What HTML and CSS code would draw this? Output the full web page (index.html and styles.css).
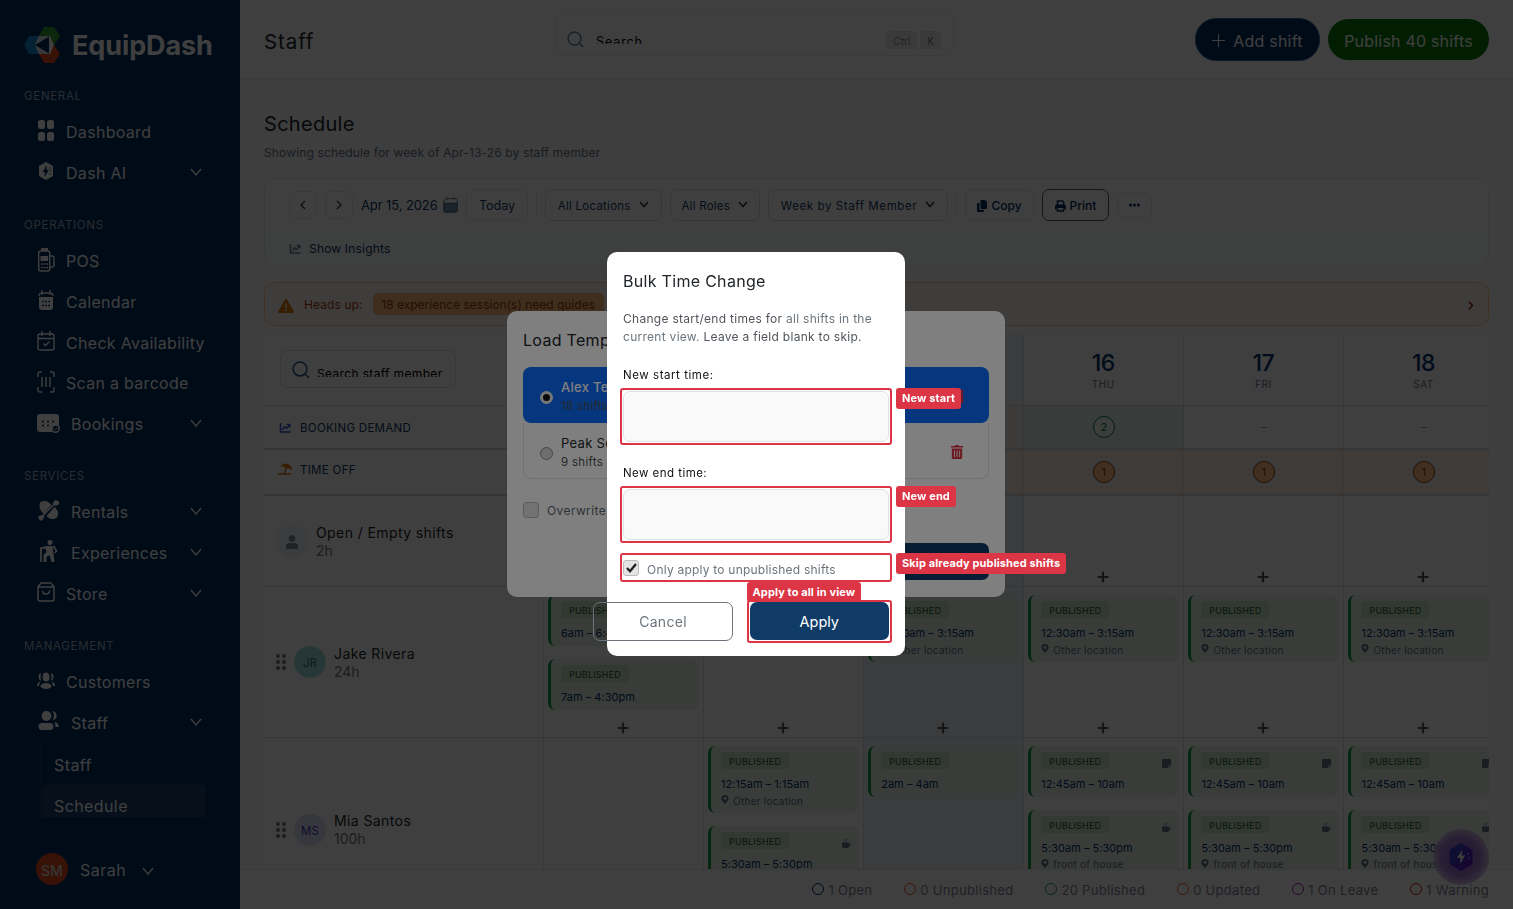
FILE: index.html
```html
<!DOCTYPE html>
<html lang="en">
<head>
  <meta charset="UTF-8">
  <meta name="viewport" content="width=device-width, initial-scale=1.0">
  <title>EquipDash - Staff Schedule</title>
  <link rel="stylesheet" href="styles.css">
</head>
<body>

  <!-- Icon sprite -->
  <svg class="sprite" xmlns="http://www.w3.org/2000/svg">
    <symbol id="i-chevron" viewBox="0 0 12 8"><path d="M1 1l5 6 5-6" fill="none" stroke="currentColor" stroke-width="1.3"/></symbol>
    <symbol id="i-down" viewBox="0 0 10 7"><path d="M1 1l4 4.5L9 1" fill="none" stroke="currentColor" stroke-width="1.5"/></symbol>
    <symbol id="i-search" viewBox="0 0 18 18"><circle cx="8" cy="8" r="6.9" fill="none" stroke="currentColor" stroke-width="1.5"/><path d="M13 13l4 4" stroke="currentColor" stroke-width="1.7"/></symbol>
    <symbol id="i-pin" viewBox="0 0 8 10"><path fill-rule="evenodd" d="M4 0a4 4 0 0 0-4 4c0 2.600 4 6 4 6s4-3.400 4-6a4 4 0 0 0-4-4zm0 2.300a1.600 1.600 0 1 1 0 3.200 1.600 1.600 0 0 1 0-3.200z" fill="currentColor"/></symbol>
    <symbol id="i-plus" viewBox="0 0 12 12"><path d="M6 1.500v9M1.500 6h9" stroke="currentColor" stroke-width="2.200" stroke-linecap="round"/></symbol>
    <symbol id="i-note" viewBox="0 0 10 10"><path d="M1 0h8q1 0 1 1v5.500H7.500q-1 0-1 1V10H1q-1 0-1-1V1q0-1 1-1z" fill="currentColor"/><path d="M10 7.300L7.300 10V7.300z" fill="currentColor"/></symbol>
    <symbol id="i-coffee" viewBox="0 0 10 10"><path d="M0 4h8v4q0 2-2 2H2q-2 0-2-2z" fill="currentColor"/><path d="M8 5h.5q1 0 1 1.200T8 7.500M2.500 3C1.500 2 3.500 1.500 2.500 0M5 3C4 2 6 1.500 5 0" fill="none" stroke="currentColor"/></symbol>
    <symbol id="i-chart" viewBox="0 0 12 11"><path d="M1 0v10h11" fill="none" stroke="currentColor" stroke-width="1.600"/><path d="M3 7.500L5.500 4l2 2L11 2M8 1.500h3.300V5" fill="none" stroke="currentColor" stroke-width="1.500"/></symbol>
    <symbol id="i-trash" viewBox="0 0 12 14"><path d="M0 1h4l.6-1h2.800L8 1h4v1.600H0z" fill="currentColor"/><path fill-rule="evenodd" d="M.8 3.400h10.400v9.100q0 1.500-1.500 1.500H2.300Q.8 14 .8 12.500zM3 5.400v6.600h.9V5.400zm2.600 0v6.600h.9V5.400zm2.600 0v6.600h.9V5.400z" fill="currentColor"/></symbol>
    <symbol id="i-drag" viewBox="0 0 10 16"><g fill="currentColor"><circle cx="2" cy="2" r="2"/><circle cx="8" cy="2" r="2"/><circle cx="2" cy="8" r="2"/><circle cx="8" cy="8" r="2"/><circle cx="2" cy="14" r="2"/><circle cx="8" cy="14" r="2"/></g></symbol>
  </svg>

  <div class="app">
    <aside class="sidebar">
      <div class="logo">
        <svg width="36" height="36" viewBox="0 0 36 36">
          <path d="M20 0h10l6 9-6 9H20l-5-9z" fill="#2fa336"/>
          <path d="M20 18h10l6 9-6 9H20l-5-9z" fill="#e2491d"/>
          <path d="M5 9h13l6 9-6 9H5l-5-9z" fill="#1389cf"/>
          <path d="M15 9h11l4 9-4 9H15l-4-9z" fill="#fff"/>
          <path d="M10 18l15-9v18z" fill="#002c60"/>
          <path d="M15 9h11l-15 9z" fill="#d8e2ec"/>
          <path d="M11 18l15 9H15z" fill="#d8e2ec"/>
        </svg>
        <span>EquipDash</span>
      </div>

      <nav class="nav">
        <h2>GENERAL</h2>
        <a class="nav-item">
          <svg width="18" height="22" viewBox="0 0 18 22"><g fill="currentColor"><rect x="1" y="0" width="7" height="9" rx="2.500"/><rect x="10" y="0" width="7" height="9" rx="2.500"/><rect x="1" y="12" width="7" height="9" rx="2.500"/><rect x="10" y="12" width="7" height="9" rx="2.500"/></g></svg>
          <span>Dashboard</span>
        </a>
        <a class="nav-item">
          <svg width="18" height="18" viewBox="0 0 18 18"><path d="M9 0l7 4v10l-7 4-7-4V4z" fill="currentColor"/><path d="M9.500 4L6 10h2.500L8 14l3.500-6H9zM12 6h2M12.500 9h2M12 12h2" fill="#002c60" stroke="#002c60" stroke-width=".6"/></svg>
          <span>Dash AI</span><svg class="caret"><use href="#i-chevron"/></svg>
        </a>

        <h2>OPERATIONS</h2>
        <a class="nav-item">
          <svg width="18" height="24" viewBox="0 0 18 24"><path d="M4 0h7v3H4z" fill="currentColor"/><rect x="1.700" y="3" width="11" height="20" rx="2" fill="none" stroke="currentColor" stroke-width="1.500"/><path d="M3.500 8h7.500v5H3.500z" fill="currentColor"/><path d="M4 16h7M4 19.500h7" stroke="currentColor" stroke-width="1.300" stroke-dasharray="1.800 .8"/><path d="M13 8h2q2 0 2 2v7q0 2-2 2h-2" fill="none" stroke="currentColor" stroke-width="1.400"/></svg>
          <span>POS</span>
        </a>
        <a class="nav-item">
          <svg width="18" height="21" viewBox="0 0 18 21"><path d="M2 7h14v10q0 3-3 3H5q-3 0-3-3z" fill="currentColor"/><path d="M2 6q0-3 3-3h8q3 0 3 3M5 0v5M13 0v5" fill="none" stroke="currentColor" stroke-width="1.300"/><path d="M5 11.500h8M5 15.500h8" stroke="#002c60" stroke-width="1.500" stroke-dasharray="1.800 1.300"/></svg>
          <span>Calendar</span>
        </a>
        <a class="nav-item">
          <svg width="18" height="20" viewBox="0 0 18 20"><rect x="1" y="3" width="16" height="16" rx="2" fill="none" stroke="currentColor" stroke-width="1.400"/><path d="M5 0v5M13 0v5M1 7.500h16M6.500 12.500l2 2 4-4" fill="none" stroke="currentColor" stroke-width="1.400"/></svg>
          <span>Check Availability</span>
        </a>
        <a class="nav-item">
          <svg width="18" height="22" viewBox="0 0 18 22"><path d="M5 1H3Q1 1 1 3v3M13 1h2q2 0 2 2v3M5 21H3q-2 0-2-2v-3M13 21h2q2 0 2-2v-3M5 6v10M9 6v10M13 6v10" fill="none" stroke="currentColor" stroke-width="1.400"/></svg>
          <span>Scan a barcode</span>
        </a>
        <a class="nav-item wide">
          <svg width="23" height="20" viewBox="0 0 23 20"><path d="M3 1h16q3 0 3 3v9a5 5 0 0 0-7 6H3q-3 0-3-3V4q0-3 3-3z" fill="currentColor"/><path d="M5 8.500h12M5 12.500h8" stroke="#002c60" stroke-width="1.500" stroke-dasharray="2 3"/><circle cx="18.500" cy="15.500" r="3.700" fill="none" stroke="currentColor" stroke-width="1.600"/><path d="M17 15.500l1.200 1.200 2-2" fill="none" stroke="currentColor"/></svg>
          <span>Bookings</span><svg class="caret"><use href="#i-chevron"/></svg>
        </a>

        <h2>SERVICES</h2>
        <a class="nav-item wide">
          <svg width="22" height="21" viewBox="0 0 22 21"><path d="M3 2q6-3 11 3L6 14Q0 8 3 2zM19 18q-6 3-10-2l8-9q6 5 2 11z" fill="currentColor"/><path d="M4 17L18 3" stroke="currentColor" stroke-width="1.500"/><path d="M15 3l3-3 3 1 1 3-4 2zM1 16l4-1 2 2-3 4-3-2z" fill="currentColor"/></svg>
          <span>Rentals</span><svg class="caret"><use href="#i-chevron"/></svg>
        </a>
        <a class="nav-item wide">
          <svg width="20" height="23" viewBox="0 0 20 23"><circle cx="11.500" cy="2.500" r="2.500" fill="currentColor"/><path d="M8 6h6l1 8 1 8h-3l-2-7-3 2v5H5v-7l3-3-1-4-3 1v-2z" fill="currentColor"/><path d="M2.500 22V8h5M15 6l3 5-2 2" fill="none" stroke="currentColor" stroke-width="1.700"/></svg>
          <span>Experiences</span><svg class="caret"><use href="#i-chevron"/></svg>
        </a>
        <a class="nav-item">
          <svg width="18" height="20" viewBox="0 0 18 20"><path d="M1 5l3-4h10l3 4v12q0 2-2 2H3q-2 0-2-2zM1 5h16M5.500 8.500q0 3.500 3.500 3.500t3.500-3.500" fill="none" stroke="currentColor" stroke-width="1.500"/></svg>
          <span>Store</span><svg class="caret"><use href="#i-chevron"/></svg>
        </a>

        <h2>MANAGEMENT</h2>
        <a class="nav-item">
          <svg width="18" height="18" viewBox="0 0 18 18"><g fill="currentColor"><ellipse cx="9" cy="5" rx="3.500" ry="4.500"/><path d="M4 1Q1 2 1.500 5T4 9Q3 5 4 1zM14 1q3 1 2.500 4T14 9q1-4 0-8zM3.500 10Q0 10 0 14h2q0-2 1.500-4zM14.500 10q3.500 0 3.500 4h-2q0-2-1.500-4z"/><ellipse cx="9" cy="14" rx="5.500" ry="3"/></g></svg>
          <span>Customers</span>
        </a>
        <a class="nav-item wide">
          <svg width="22" height="20" viewBox="0 0 22 20"><g fill="currentColor"><circle cx="9" cy="5" r="5"/><rect x="1" y="12" width="15" height="7" rx="3.500"/><path d="M15 0q5 1 4 6-1 3-4 3 3-4 0-9zM17 11q5 1 4 5h-3q0-3-1-5z"/></g></svg>
          <span>Staff</span><svg class="caret"><use href="#i-chevron"/></svg>
        </a>
        <div class="subnav">
          <a>Staff</a>
          <a class="active">Schedule</a>
        </div>
      </nav>

      <div class="user">
        <span class="user-badge">SM</span>
        <span class="user-name">Sarah</span>
        <svg class="caret"><use href="#i-chevron"/></svg>
      </div>
    </aside>

    <main class="main">
      <header class="topbar">
        <h1>Staff</h1>
        <div class="search">
          <svg width="17" height="17"><use href="#i-search"/></svg>
          <span class="search-text">Search</span>
          <kbd>Ctrl</kbd><kbd>K</kbd>
        </div>
        <div class="top-actions">
          <button class="btn-add"><svg width="13" height="13" viewBox="0 0 13 13"><path d="M6.500 0v13M0 6.500h13" stroke="currentColor"/></svg>Add shift</button>
          <button class="btn-publish">Publish 40 shifts</button>
        </div>
      </header>

      <section class="content">
        <h2 class="page-title">Schedule</h2>
        <p class="page-sub">Showing schedule for week of Apr-13-26 by staff member</p>

        <div class="toolbar">
          <div class="tool-row">
            <button class="tool arrow"><svg width="6" height="10" viewBox="0 0 6 10"><path d="M5 1L1 5l4 4" fill="none" stroke="currentColor" stroke-width="1.400"/></svg></button>
            <button class="tool arrow"><svg width="6" height="10" viewBox="0 0 6 10"><path d="M1 1l4 4-4 4" fill="none" stroke="currentColor" stroke-width="1.400"/></svg></button>
            <div class="date"><span>Apr 15, 2026</span>
              <svg width="15" height="16" viewBox="0 0 15 16"><rect x=".6" y="1.600" width="13.800" height="13.800" rx="3" fill="none" stroke="currentColor"/><path d="M.5 6h14v7q0 2.500-3 2.500h-8q-3 0-3-2.500zM4 0v3M11 0v3" fill="currentColor" stroke="currentColor"/><path d="M3.500 9h8M3.500 12h8" stroke="#aebfd0" stroke-width="1.200" stroke-dasharray="1.600 1.600"/></svg>
            </div>
            <button class="tool today">Today</button>
            <i class="sep"></i>
            <button class="tool select locations">All Locations<svg width="10" height="7"><use href="#i-down"/></svg></button>
            <button class="tool select roles">All Roles<svg width="10" height="7"><use href="#i-down"/></svg></button>
            <button class="tool select week">Week by Staff Member<svg width="10" height="7"><use href="#i-down"/></svg></button>
            <i class="sep"></i>
            <button class="tool strong copy"><svg width="10" height="12" viewBox="0 0 10 12"><path d="M3.500 0H8l2 2v6q0 1-1 1H4.500q-1 0-1-1zM1 3h1.500v6q0 1 1 1H7v1q0 1-1 1H1q-1 0-1-1V4q0-1 1-1z" fill="currentColor"/></svg>Copy</button>
            <button class="tool strong print"><svg width="11" height="12" viewBox="0 0 11 12"><path d="M2.500 5V1h5l1.200 1.200V5M2.500 8.500V11h6V8.500" fill="none" stroke="currentColor" stroke-width="1.500"/><path d="M1.500 4.500h8Q11 4.500 11 6v3.500H9.200V8H1.800v1.500H0V6q0-1.500 1.500-1.500z" fill="currentColor"/></svg>Print</button>
            <button class="tool more"><svg width="11" height="4" viewBox="0 0 11 4"><g fill="currentColor"><circle cx="1.600" cy="2" r="1.500"/><circle cx="5.500" cy="2" r="1.500"/><circle cx="9.400" cy="2" r="1.500"/></g></svg></button>
          </div>
          <div class="insights"><svg width="12" height="10"><use href="#i-chart"/></svg>Show Insights</div>
        </div>

        <div class="alert">
          <svg width="16" height="14" viewBox="0 0 16 14"><path d="M8 0q.8 0 1.200.8l6.500 11.400Q16.300 14 14.800 14H1.200Q-.3 14 .3 12.200L6.800.8Q7.200 0 8 0z" fill="#dd7a0c"/><path d="M8 4.500v4.500M8 10.500v1.700" stroke="#fff7ed" stroke-width="1.600"/></svg>
          <span class="alert-label">Heads up:</span>
          <span class="alert-badge">18 experience session(s) need guides</span>
          <svg class="alert-arrow" width="6" height="9" viewBox="0 0 6 9"><path d="M1 .8l3.500 3.700L1 8.200" fill="none" stroke="currentColor" stroke-width="1.700"/></svg>
        </div>

        <div class="schedule">
          <div class="row head">
            <div class="side">
              <div class="staff-search"><svg width="18" height="18"><use href="#i-search"/></svg><span>Search staff member</span></div>
            </div>
            <div class="day"></div>
            <div class="day"></div>
            <div class="day current"></div>
            <div class="day"><b>16</b><small>THU</small></div>
            <div class="day"><b>17</b><small>FRI</small></div>
            <div class="day"><b>18</b><small>SAT</small></div>
          </div>

          <div class="row demand">
            <div class="side caption"><svg class="blue" width="12" height="10"><use href="#i-chart"/></svg>BOOKING DEMAND</div>
            <div class="day"></div>
            <div class="day"></div>
            <div class="day busy"></div>
            <div class="day calm"><span class="count green">2</span></div>
            <div class="day">–</div>
            <div class="day">–</div>
          </div>

          <div class="row timeoff">
            <div class="side caption"><svg class="orange" width="15" height="12" viewBox="0 0 15 12"><path d="M2 4Q5-1 10 1q4 2 4 6l-4-2-3 0-2-2z" fill="currentColor"/><path d="M8.500 4L6.500 11M0 11h13" stroke="currentColor" stroke-width="1.400"/></svg>TIME OFF</div>
            <div class="day"></div>
            <div class="day"></div>
            <div class="day"></div>
            <div class="day"><span class="count">1</span></div>
            <div class="day"><span class="count">1</span></div>
            <div class="day"><span class="count">1</span></div>
          </div>

          <div class="row open">
            <div class="side person">
              <span class="avatar empty"><svg width="12" height="14" viewBox="0 0 12 14"><circle cx="6" cy="3.500" r="3.300" fill="currentColor"/><path d="M0 14v-2q0-4 3.500-4h5q3.500 0 3.500 4v2z" fill="currentColor"/></svg></span>
              <div><p>Open / Empty shifts</p><small>2h</small></div>
            </div>
            <div class="day"></div>
            <div class="day"></div>
            <div class="day current"></div>
            <div class="day"><svg class="add"><use href="#i-plus"/></svg></div>
            <div class="day"><svg class="add"><use href="#i-plus"/></svg></div>
            <div class="day"><svg class="add"><use href="#i-plus"/></svg></div>
          </div>

          <div class="row jake">
            <div class="side person">
              <svg class="drag"><use href="#i-drag"/></svg>
              <span class="avatar teal">JR</span>
              <div><p>Jake Rivera</p><small>24h</small></div>
            </div>
            <div class="day">
              <div class="shift"><em>PUBLISHED</em><p>6am – 6:45am</p></div>
              <div class="shift"><em>PUBLISHED</em><p>7am – 4:30pm</p></div>
              <svg class="add"><use href="#i-plus"/></svg>
            </div>
            <div class="day"><svg class="add"><use href="#i-plus"/></svg></div>
            <div class="day current">
              <div class="shift"><em>PUBLISHED</em><p>12:30am – 3:15am</p><small><svg><use href="#i-pin"/></svg>Other location</small></div>
              <svg class="add"><use href="#i-plus"/></svg>
            </div>
            <div class="day">
              <div class="shift"><em>PUBLISHED</em><p>12:30am – 3:15am</p><small><svg><use href="#i-pin"/></svg>Other location</small></div>
              <svg class="add"><use href="#i-plus"/></svg>
            </div>
            <div class="day">
              <div class="shift"><em>PUBLISHED</em><p>12:30am – 3:15am</p><small><svg><use href="#i-pin"/></svg>Other location</small></div>
              <svg class="add"><use href="#i-plus"/></svg>
            </div>
            <div class="day">
              <div class="shift"><em>PUBLISHED</em><p>12:30am – 3:15am</p><small><svg><use href="#i-pin"/></svg>Other location</small></div>
              <svg class="add"><use href="#i-plus"/></svg>
            </div>
          </div>

          <div class="row mia">
            <div class="side person">
              <svg class="drag"><use href="#i-drag"/></svg>
              <span class="avatar violet">MS</span>
              <div><p>Mia Santos</p><small>100h</small></div>
            </div>
            <div class="day"></div>
            <div class="day">
              <div class="shift"><em>PUBLISHED</em><p>12:15am – 1:15am</p><small><svg><use href="#i-pin"/></svg>Other location</small></div>
              <div class="shift"><em>PUBLISHED</em><svg class="flag"><use href="#i-coffee"/></svg><p>5:30am – 5:30pm</p></div>
            </div>
            <div class="day current">
              <div class="shift"><em>PUBLISHED</em><p>2am – 4am</p></div>
            </div>
            <div class="day">
              <div class="shift"><em>PUBLISHED</em><svg class="flag"><use href="#i-note"/></svg><p>12:45am – 10am</p></div>
              <div class="shift"><em>PUBLISHED</em><svg class="flag"><use href="#i-coffee"/></svg><p>5:30am – 5:30pm</p><small><svg><use href="#i-pin"/></svg>front of house</small></div>
            </div>
            <div class="day">
              <div class="shift"><em>PUBLISHED</em><svg class="flag"><use href="#i-note"/></svg><p>12:45am – 10am</p></div>
              <div class="shift"><em>PUBLISHED</em><svg class="flag"><use href="#i-coffee"/></svg><p>5:30am – 5:30pm</p><small><svg><use href="#i-pin"/></svg>front of house</small></div>
            </div>
            <div class="day">
              <div class="shift"><em>PUBLISHED</em><svg class="flag"><use href="#i-note"/></svg><p>12:45am – 10am</p></div>
              <div class="shift"><em>PUBLISHED</em><svg class="flag"><use href="#i-coffee"/></svg><p>5:30am – 5:30pm</p><small><svg><use href="#i-pin"/></svg>front of house</small></div>
            </div>
          </div>
        </div>
      </section>

      <footer class="legend">
        <span class="l-open">1 Open</span>
        <span class="l-unpub">0 Unpublished</span>
        <span class="l-pub">20 Published</span>
        <span class="l-upd">0 Updated</span>
        <span class="l-leave">1 On Leave</span>
        <span class="l-warn">1 Warning</span>
      </footer>
    </main>

    <div class="fab">
      <svg width="24" height="28" viewBox="0 0 24 28"><defs><linearGradient id="hex" x1="0" y1="0" x2="1" y2="1"><stop offset="0" stop-color="#1f50d0"/><stop offset="1" stop-color="#7008b8"/></linearGradient></defs><path d="M12 0l11.500 7v14L12 28 .5 21V7z" fill="url(#hex)"/><path d="M13 7l-5 8h3.500L11 21l5-8.500h-3.500z" fill="#fff"/><circle cx="19" cy="11" r=".7" fill="#fff"/><circle cx="20" cy="15" r=".7" fill="#fff"/></svg>
    </div>
  </div>

  <!-- Load template dialog -->
  <div class="backdrop">
    <div class="dialog load">
      <h3>Load Template</h3>
      <div class="templates">
        <div class="template selected"><i class="radio on"></i><div><b>Alex Template</b><small>18 shifts</small></div><svg class="trash"><use href="#i-trash"/></svg></div>
        <div class="template"><i class="radio"></i><div><b>Peak Season</b><small>9 shifts</small></div><svg class="trash"><use href="#i-trash"/></svg></div>
      </div>
      <div class="check-row"><i class="check"></i><span>Overwrite</span></div>
      <button class="btn-primary"></button>
    </div>
  </div>

  <!-- Bulk time change dialog -->
  <div class="backdrop">
    <div class="dialog bulk">
      <h3>Bulk Time Change</h3>
      <p class="hint">Change start/end times for <span>all shifts in the<br>current view.</span> Leave a field blank to skip.</p>
      <label>New start time:</label>
      <div class="mark">
        <div class="time-input"></div>
        <span class="tag">New start</span>
      </div>
      <label class="end">New end time:</label>
      <div class="mark">
        <div class="time-input"></div>
        <span class="tag">New end</span>
      </div>
      <div class="mark mark-check">
        <i class="check"><svg width="11" height="10" viewBox="0 0 11 10"><path d="M1 5l3 3.200L10 1" fill="none" stroke="#222" stroke-width="2.400"/></svg></i>
        <span class="check-text">Only apply to unpublished shifts</span>
        <span class="tag">Skip already published shifts</span>
      </div>
      <div class="buttons">
        <button class="btn-cancel">Cancel</button>
        <div class="mark mark-apply">
          <button class="btn-primary">Apply</button>
          <span class="tag above">Apply to all in view</span>
        </div>
      </div>
    </div>
  </div>

</body>
</html>
```
FILE: styles.css
```css
/* General */
* {
  box-sizing: border-box;
}

body {
  margin: 0;
  font-family: Inter, "Liberation Sans", sans-serif;
  color: #212529;
  background: #f8f9fa;
  overflow: hidden;
}

h1, h2, h3, p {
  margin: 0;
  font-weight: 400;
}

button {
  font-family: inherit;
  padding: 0;
  background: none;
  border: 0;
}

svg {
  flex: none;
}

.sprite {
  position: absolute;
  width: 0;
  height: 0;
}

.app {
  display: flex;
  height: 909px;
}

/* Sidebar */
.sidebar {
  display: flex;
  flex-direction: column;
  width: 240px;
  flex: none;
  background: #002c60;
  color: #fff;
}

.logo {
  display: flex;
  align-items: center;
  gap: 12px;
  height: 64px;
  padding: 26px 0 0 24px;
  font-size: 27px;
  font-weight: 700;
  letter-spacing: -0.1px;
}

.nav {
  height: 753px;
  overflow: hidden;
}

.nav h2 {
  height: 47.3px;
  padding: 25px 0 0 24px;
  font-size: 11.5px;
  line-height: 14px;
  letter-spacing: 0.7px;
  color: #a3b1c0;
}

.nav-item {
  display: flex;
  align-items: center;
  height: 40.8px;
  padding: 0 38px 0 37px;
  font-size: 16px;
  letter-spacing: 0.3px;
  white-space: nowrap;
}

.nav-item span {
  padding-top: 1px;
  margin-left: 11px;
}

.nav-item > svg:first-child {
  margin-bottom: 2px;
}

.nav-item.wide > svg:first-child {
  width: 23px;
}

.caret {
  width: 12px;
  height: 8px;
}

.nav-item .caret {
  margin: 0 0 1px auto;
}

.subnav {
  margin-left: 40px;
  width: 166px;
}

.subnav a {
  display: block;
  height: 41px;
  padding-left: 12px;
  font-size: 16px;
  line-height: 44px;
  letter-spacing: 0.4px;
  border-left: 2px solid #113a66;
}

.subnav a.active {
  background: #183f6b;
  border-radius: 6px 6px 0 0;
}

.user {
  display: flex;
  align-items: center;
  height: 32px;
  margin-top: 36px;
  padding-left: 36px;
}

.user-badge {
  width: 32px;
  height: 32px;
  padding-top: 2px;
  border-radius: 50%;
  background: #e2491d;
  font-size: 14px;
  font-weight: 500;
  line-height: 32px;
  text-align: center;
  color: #d8d8d8;
}

.user-name {
  margin: 1px 16px 0 12px;
  font-size: 16px;
  letter-spacing: 0.5px;
}

.user .caret {
  margin-top: 3px;
}

/* Top bar */
.main {
  display: flex;
  flex-direction: column;
  width: 1273px;
}

.topbar {
  display: grid;
  grid-template-columns: 291px 399px 1fr;
  align-items: center;
  height: 80px;
  padding: 0 24px;
  background: #fcfcfc;
  border-bottom: 2px solid #eceef0;
}

.topbar h1 {
  padding-top: 4px;
  font-size: 20.5px;
  letter-spacing: 0.9px;
}

.search {
  display: flex;
  align-items: center;
  height: 44px;
  margin-top: -10px;
  padding: 0 12px 0 11px;
  border: 1px solid #e9edf1;
  border-radius: 10px;
  color: #64829f;
}

.search svg {
  margin-top: 11px;
}

.search-text {
  flex: 1;
  height: 8px;
  margin: 12px 0 0 12px;
  overflow: hidden;
  font-size: 12.5px;
  line-height: 12px;
  letter-spacing: 0.9px;
  color: #000;
}

kbd {
  height: 18px;
  margin: 11px 0 0 3px;
  padding: 0 6px;
  border: 1px solid #dde2e7;
  border-radius: 4px;
  background: #e8ebee;
  font: 10px/18px Inter, sans-serif;
  color: #76818c;
}

.top-actions {
  display: flex;
  justify-content: flex-end;
  align-items: center;
  gap: 8px;
}

.btn-add, .btn-publish {
  height: 41px;
  border-radius: 21px;
  font-size: 16px;
  letter-spacing: 0.2px;
  color: #fff;
  padding-top: 3px;
}

.btn-add {
  display: flex;
  align-items: center;
  justify-content: center;
  gap: 8px;
  width: 125px;
  height: 43px;
  border: 1px solid #34699b;
  background: #002c60;
}

.btn-publish {
  width: 161px;
  background: #087b08;
}

/* Content */
.content {
  flex: 1;
  min-height: 0;
  padding: 32px 24px 0;
  overflow: hidden;
}

.page-title {
  font-size: 20px;
  line-height: 25px;
  letter-spacing: 0.3px;
}

.page-sub {
  margin: 7px 0 16px;
  font-size: 12px;
  line-height: 18px;
  letter-spacing: 0.14px;
  color: #64748b;
}

.toolbar {
  height: 88px;
  border: 1px solid #e6eaee;
  border-radius: 12px;
  background: #fff;
  overflow: hidden;
}

.tool-row {
  display: flex;
  align-items: center;
  gap: 8px;
  height: 52px;
  padding-left: 24px;
}

.tool {
  display: flex;
  align-items: center;
  justify-content: center;
  height: 32px;
  border: 1px solid #e2e7ec;
  border-radius: 7px;
  font-size: 12px;
  color: #123a66;
}

.arrow {
  width: 28px;
  height: 28px;
  color: #444;
}

.date {
  display: flex;
  align-items: center;
  justify-content: space-between;
  width: 97px;
  font-size: 13px;
  letter-spacing: -0.1px;
  color: #0a3563;
}

.date svg {
  color: #64829f;
}

.today {
  width: 62px;
  font-size: 12.5px;
  padding-top: 1px;
}

.sep {
  width: 1px;
  height: 22px;
  background: #dde3e9;
}

.select {
  gap: 8px;
  padding-top: 1px;
  border-color: #d5dbe1;
  font-size: 11.5px;
  letter-spacing: 0.25px;
}

.select svg {
  margin-top: -2px;
  color: #333;
}

.locations { width: 116.5px; }
.roles { width: 90.5px; }
.week { width: 180px; letter-spacing: 0.6px; }
.copy { width: 69px; }
.more { width: 35px; height: 25px; color: #002c60; }

.print {
  width: 67px;
  border-color: #54616e;
}

.strong {
  gap: 4px;
  padding-top: 1px;
  font-weight: 500;
  color: #002c60;
}

.insights {
  display: flex;
  align-items: center;
  gap: 8px;
  height: 35px;
  padding-left: 24px;
  font-size: 12px;
  letter-spacing: 0.18px;
  color: #0a3563;
  background: #fbfcfc;
}

.insights svg {
  color: #64829f;
}

.alert {
  display: flex;
  align-items: center;
  height: 44px;
  margin: 16px 0 8px;
  padding: 0 14px 0 13px;
  border: 1px solid #fdc896;
  border-radius: 10px;
  background: #fff7ed;
  font-size: 12px;
  color: #9a3412;
}

.alert svg {
  margin-top: 3px;
}

.alert-label {
  margin: 1px 10px 0;
  letter-spacing: 0.1px;
}

.alert-badge {
  width: 231px;
  height: 22px;
  border-radius: 5px;
  background: #fdba74;
  line-height: 23px;
  text-align: center;
}

.alert .alert-arrow {
  margin: 2px 0 0 auto;
}

/* Schedule grid */
.schedule {
  background: #fff;
  overflow: hidden;
}

.row {
  display: grid;
  grid-template-columns: 279px repeat(6, 160.1px);
  width: 1241px;
  border-bottom: 1px solid #d5dbe1;
}

.head { height: 72px; }
.demand { height: 44px; border-bottom-width: 2px; }
.timeoff { height: 46px; border-bottom-width: 2px; }
.open { height: 91px; }
.jake { height: 151px; }
.mia { height: 184px; }

.day {
  position: relative;
  border-left: 1px solid #dde1e5;
}

.day.current {
  background: #eef2f9;
}

.head .day {
  display: flex;
  flex-direction: column;
  align-items: center;
  padding: 15px 1px 0 0;
}

.head b {
  font-size: 23px;
  font-weight: 500;
  line-height: 28px;
  letter-spacing: -0.5px;
  color: #003068;
}

.head small {
  margin-top: 1px;
  font-size: 10px;
  line-height: 13px;
  letter-spacing: 0.6px;
  color: #64748b;
}

.staff-search {
  display: flex;
  align-items: center;
  width: 176px;
  height: 38px;
  margin: 16px 0 0 16px;
  padding-left: 11px;
  border: 1px solid #d9dfe5;
  border-radius: 8px;
  color: #2a5580;
}

.staff-search svg {
  margin-top: 2px;
}

.staff-search span {
  height: 9px;
  margin: 7px 0 0 7px;
  overflow: hidden;
  font-size: 12px;
  line-height: 12px;
  letter-spacing: 0.35px;
  color: #000;
}

.caption {
  display: flex;
  align-items: center;
  gap: 9px;
  padding: 2px 0 0 15px;
  font-size: 11.5px;
  letter-spacing: 0.3px;
  color: #0a3563;
}

.timeoff .caption {
  gap: 7px;
  padding: 0 0 4px 14px;
}

.timeoff .caption svg {
  margin-top: -3px;
}

.blue { color: #2453c9; }
.orange { color: #dd7a0c; }

.demand .day, .timeoff .day {
  display: flex;
  align-items: center;
  justify-content: center;
  font-size: 11px;
  color: #94a3b8;
}

.demand .busy { background: #f5ece4; }
.demand .calm { background: #e2f0ec; }
.timeoff .day { background: #f8eee5; }

.count {
  width: 22px;
  height: 22px;
  border: 1px solid #9a3412;
  border-radius: 50%;
  background: #fdc38a;
  font-size: 11px;
  line-height: 21px;
  text-align: center;
  color: #9a3412;
}

.count.green {
  border-color: #157a3a;
  background: #edf8f2;
  color: #157a3a;
}

.person {
  display: flex;
  align-items: center;
  padding-left: 12px;
}

.person p {
  padding-top: 1px;
  font-size: 14px;
  line-height: 18px;
  letter-spacing: 0.4px;
}

.person small {
  display: block;
  font-size: 14px;
  line-height: 18px;
  color: #717880;
}

.drag {
  width: 10px;
  height: 16px;
  margin-right: 8px;
  color: #777;
}

.avatar {
  display: flex;
  align-items: center;
  justify-content: center;
  width: 32px;
  height: 32px;
  padding-top: 2px;
  margin-right: 8px;
  border-radius: 50%;
  font-size: 11.5px;
}

.avatar.empty { background: #eef2f8; color: #7c889c; }
.avatar.teal { background: #9fdfdf; color: #17708a; }
.avatar.violet { background: #dcdcf8; color: #4a35c0; }

.add {
  position: absolute;
  left: 73px;
  bottom: 3px;
  width: 12px;
  height: 12px;
  color: #505050;
}

.jake .day, .mia .day {
  display: flex;
  flex-direction: column;
  gap: 12.5px;
  padding: 8px 4px 0;
}

.shift {
  position: relative;
  flex: none;
  width: 151px;
  padding: 6px 0 6px 10px;
  border-left: 3px solid #16a34a;
  border-radius: 7px;
  background: #e8f3e9;
}

.shift em {
  display: block;
  width: 68px;
  height: 17px;
  border-radius: 4px;
  background: #c8e3cb;
  font-size: 9px;
  font-style: normal;
  line-height: 19px;
  letter-spacing: 0.2px;
  text-align: center;
  color: #1b5e20;
}

.shift p {
  margin-top: 8px;
  font-size: 11px;
  line-height: 14px;
  letter-spacing: 0.02px;
  color: #003068;
}

.shift small {
  display: flex;
  align-items: center;
  gap: 4px;
  height: 13px;
  margin-top: 3px;
  font-size: 10px;
  letter-spacing: 0.25px;
  color: #64748b;
}

.shift small svg {
  width: 8px;
  height: 9px;
  margin-bottom: 2px;
}

.flag {
  position: absolute;
  top: 13px;
  right: 8px;
  width: 9px;
  height: 9px;
  color: #64748b;
}

/* Legend footer */
.legend {
  display: flex;
  justify-content: flex-end;
  align-items: center;
  gap: 32px;
  height: 40px;
  padding: 1px 24px 0 0;
  border-top: 1px solid #e4e8ec;
  background: #fcfcfc;
  font-size: 13px;
  letter-spacing: 0.3px;
  color: #7c8798;
}

.legend span::before {
  content: "";
  display: inline-block;
  box-sizing: border-box;
  width: 12px;
  height: 12px;
  margin-right: 4px;
  border: 1px solid;
  border-radius: 50%;
}

.l-open::before { border-color: #002c60 !important; }
.l-unpub::before { border-color: #e2581d !important; }
.l-pub::before { border-color: #16a34a !important; }
.l-upd::before { border-color: #f26b2b !important; }
.l-leave::before { border-color: #a21caf !important; }
.l-warn::before { border-color: #dc2626 !important; }

.fab {
  position: absolute;
  left: 1433px;
  top: 829px;
  display: flex;
  align-items: center;
  justify-content: center;
  width: 56px;
  height: 56px;
  border-radius: 50%;
  background: radial-gradient(circle, #9a63d6 20%, #a67fd2 50%, rgba(190, 165, 225, 0.7) 70%);
}

/* Dialogs */
.backdrop {
  position: fixed;
  inset: 0;
  display: flex;
  align-items: center;
  justify-content: center;
  background: rgba(0, 0, 0, 0.5);
}

.dialog {
  margin: 0 1px 1px 0;
  border-radius: 10px;
  background: #fff;
}

.dialog h3 {
  font-size: 16px;
  line-height: 24px;
  letter-spacing: 0.3px;
}

.load {
  width: 498px;
  height: 286px;
  padding: 17px 16px;
}

.templates {
  margin-top: 15px;
}

.template {
  display: flex;
  align-items: center;
  height: 56px;
  padding: 2px 25px 0 17px;
  border: 1px solid #dee2e6;
  border-top: 0;
  border-radius: 0 0 8px 8px;
}

.template.selected {
  border: 0;
  border-radius: 8px;
  background: #0d6efd;
}

.template b {
  display: block;
  font-size: 13px;
  font-weight: 400;
  line-height: 20px;
  letter-spacing: 0.3px;
}

.template.selected b {
  font-weight: 500;
  color: #fff;
}

.template small {
  display: block;
  font-size: 11.5px;
  line-height: 18px;
  letter-spacing: 0.3px;
  color: #495057;
}

.radio {
  width: 13px;
  height: 13px;
  margin: 3px 8px 0 0;
  border: 1px solid #8c8c8c;
  border-radius: 50%;
  background: #ddd;
}

.template:not(.selected) .radio {
  margin-left: -1px;
}

.radio.on {
  border: 3.5px solid #ececec;
  background: #111;
}

.trash {
  width: 12px;
  height: 14px;
  margin-left: auto;
  color: #dc3545;
}

.check-row {
  display: flex;
  align-items: center;
  gap: 8px;
  margin-top: 19px;
  font-size: 12px;
  line-height: 20px;
  letter-spacing: 0.4px;
  color: #5c666f;
}

.check-row span {
  padding-top: 3px;
}

.check {
  display: flex;
  align-items: center;
  justify-content: center;
  width: 16px;
  height: 16px;
  border: 1px solid #bbb;
  border-radius: 3px;
  background: #e4e4e4;
}

.btn-primary {
  display: block;
  border-radius: 7px;
  background: #0f3b66;
  font-size: 14.5px;
  color: #fff;
}

.load .btn-primary {
  width: 141px;
  height: 37px;
  margin: 22px 0 0 auto;
}

.bulk {
  width: 298px;
  height: 404px;
  padding: 17px 13px 0;
}

.bulk h3, .hint, .bulk label {
  margin-left: 3px;
}

.hint {
  margin-top: 17px;
  font-size: 12px;
  line-height: 18px;
  letter-spacing: 0.28px;
  white-space: nowrap;
  color: #50565c;
}

.hint span {
  color: #6c757d;
}

.bulk label {
  display: block;
  margin-top: 20px;
  font-size: 11.5px;
  line-height: 18px;
  letter-spacing: 0.55px;
  color: #111;
}

.bulk label.end {
  margin-top: 19px;
  letter-spacing: 0.45px;
}

/* Annotated areas */
.mark {
  position: relative;
  width: 272px;
  height: 57px;
  margin-top: 4px;
  padding: 1px;
  border: 2px solid #dc3545;
  border-radius: 3px;
}

.time-input {
  height: 51px;
  border: 1px solid #dee2e6;
  border-radius: 7px;
  background: #f9f9f9;
}

.mark-check {
  display: flex;
  align-items: center;
  gap: 8px;
  height: 29px;
  margin-top: 10px;
  font-size: 12px;
  letter-spacing: 0.22px;
  color: #6c757d;
}

.check-text {
  padding-top: 4px;
}

.tag {
  position: absolute;
  top: -2px;
  left: 274px;
  height: 21px;
  padding: 0 6px;
  border-radius: 3px;
  background: #dc3545;
  font-size: 11px;
  font-weight: 700;
  line-height: 21px;
  letter-spacing: 0.12px;
  white-space: nowrap;
  color: #fff;
}

.buttons {
  display: flex;
  justify-content: flex-end;
  align-items: center;
  gap: 13.5px;
  margin-top: 18px;
}

.btn-cancel {
  flex: none;
  width: 140px;
  height: 39px;
  border: 1px solid #6c757d;
  border-radius: 7px;
  font-size: 14px;
  letter-spacing: 0.3px;
  color: #6c757d;
}

.mark-apply {
  flex: none;
  width: 145.5px;
  height: 43px;
  margin: 0;
  padding: 0 1px;
}

.mark-apply .btn-primary {
  width: 100%;
  height: 38px;
}

.tag.above {
  top: -20px;
  left: -2px;
  height: 20px;
}
```
